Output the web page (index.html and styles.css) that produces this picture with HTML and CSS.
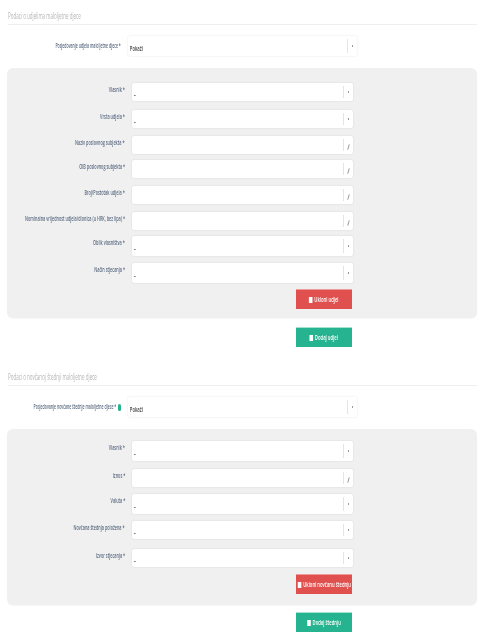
FILE: index.html
```html
<!DOCTYPE html>
<html lang="hr">
<head>
    <meta charset="UTF-8">
    <meta name="viewport" content="width=device-width, initial-scale=1.0">
    <title>Podaci o maloljetnoj djeci</title>
    <link rel="stylesheet" href="styles.css">
</head>
<body>
    <main class="page">
        <section class="block block-shares">
            <h2 class="block-title"><span>Podaci o udjelima maloljetne djece</span></h2>
            <div class="top-row">
                <label class="field-label"><span>Posjedovanje udjela maloljetne djece *</span></label>
                <div class="control top-control"><span class="value">Pokaži</span><span class="addon"><i class="caret"></i></span></div>
            </div>
            <div class="panel panel-shares">
                <div class="field"><label class="field-label"><span>Vlasnik *</span></label><div class="control"><span class="value">–</span><span class="addon"><i class="caret"></i></span></div></div>
                <div class="field"><label class="field-label"><span>Vrsta udjela *</span></label><div class="control"><span class="value">–</span><span class="addon"><i class="caret"></i></span></div></div>
                <div class="field"><label class="field-label"><span>Naziv poslovnog subjekta *</span></label><div class="control"><span class="addon"><svg class="pencil" viewBox="0 0 4 8"><path d="M1 7.5 3 .5"/></svg></span></div></div>
                <div class="field"><label class="field-label"><span>OIB poslovnog subjekta *</span></label><div class="control"><span class="addon"><svg class="pencil" viewBox="0 0 4 8"><path d="M1 7.5 3 .5"/></svg></span></div></div>
                <div class="field"><label class="field-label"><span>Broj/Postotak udjela *</span></label><div class="control"><span class="addon"><svg class="pencil" viewBox="0 0 4 8"><path d="M1 7.5 3 .5"/></svg></span></div></div>
                <div class="field"><label class="field-label"><span>Nominalna vrijednost udjela/dionica (u HRK, bez lipa) *</span></label><div class="control"><span class="addon"><svg class="pencil" viewBox="0 0 4 8"><path d="M1 7.5 3 .5"/></svg></span></div></div>
                <div class="field"><label class="field-label"><span>Oblik vlasništva *</span></label><div class="control tall"><span class="value">–</span><span class="addon"><i class="caret"></i></span></div></div>
                <div class="field"><label class="field-label"><span>Način stjecanja *</span></label><div class="control tall"><span class="value">–</span><span class="addon"><i class="caret"></i></span></div></div>
                <div class="actions"><button class="btn btn-remove" type="button"><span class="btn-inner"><i class="btn-icon"></i>Ukloni udjel</span></button></div>
            </div>
            <div class="actions outer"><button class="btn btn-add" type="button"><span class="btn-inner"><i class="btn-icon"></i>Dodaj udjel</span></button></div>
        </section>

        <section class="block block-savings">
            <h2 class="block-title"><span>Podaci o novčanoj štednji maloljetne djece</span></h2>
            <div class="top-row">
                <label class="field-label"><span>Posjedovanje novčane štednje maloljetne djece *</span><i class="info"></i></label>
                <div class="control top-control"><span class="value">Pokaži</span><span class="addon"><i class="caret"></i></span></div>
            </div>
            <div class="panel panel-savings">
                <div class="field"><label class="field-label"><span>Vlasnik *</span></label><div class="control tall"><span class="value">–</span><span class="addon"><i class="caret"></i></span></div></div>
                <div class="field"><label class="field-label"><span>Iznos *</span></label><div class="control"><span class="addon"><svg class="pencil" viewBox="0 0 4 8"><path d="M1 7.5 3 .5"/></svg></span></div></div>
                <div class="field"><label class="field-label"><span>Valuta *</span></label><div class="control tall"><span class="value">–</span><span class="addon"><i class="caret"></i></span></div></div>
                <div class="field"><label class="field-label"><span>Novčana štednja položena *</span></label><div class="control"><span class="value">–</span><span class="addon"><i class="caret"></i></span></div></div>
                <div class="field"><label class="field-label"><span>Izvor stjecanja *</span></label><div class="control"><span class="value">–</span><span class="addon"><i class="caret"></i></span></div></div>
                <div class="actions"><button class="btn btn-remove" type="button"><span class="btn-inner"><i class="btn-icon"></i>Ukloni novčanu štednju</span></button></div>
            </div>
            <div class="actions outer"><button class="btn btn-add" type="button"><span class="btn-inner"><i class="btn-icon"></i>Dodaj štednju</span></button></div>
        </section>
    </main>
</body>
</html>
```

FILE: styles.css
```css
body {
    margin: 0;
    background: #fff;
    font-family: "Open Sans", sans-serif;
    color: #5b6b82;
}
.page {
    width: 490px;
    height: 640px;
    overflow: hidden;
    padding: 10px 13px 0 7px;
    box-sizing: border-box;
    filter: blur(0.55px);
}
.block-savings {
    margin-top: 24px;
}
.block-savings .actions.outer {
    margin-top: 7px;
}
.block-title {
    margin: 0 0 11px 1px;
    height: 14px;
    border-bottom: 1px solid #efefef;
    font-size: 9px;
    line-height: 12px;
    font-weight: normal;
    color: #b4b4b4;
    white-space: nowrap;
}
.block-title span {
    display: inline-block;
    transform: scaleX(0.5);
    transform-origin: left;
}
.top-row {
    display: grid;
    grid-template-columns: 114px 229px;
    column-gap: 7px;
    height: 32px;
    align-items: start;
}
.top-row .field-label {
    padding-top: 5px;
}
.field {
    display: grid;
    grid-template-columns: 118px 221px;
    column-gap: 7px;
    align-items: start;
}
.field-label {
    display: flex;
    justify-content: flex-end;
    align-items: center;
    font-size: 7px;
    line-height: 10px;
    font-weight: 600;
    white-space: nowrap;
    padding-top: 2px;
}
.field-label span {
    display: inline-block;
    transform: scaleX(0.54);
    transform-origin: right;
}
.top-row .field-label span {
    transform: scaleX(0.5);
}
.info {
    flex: none;
    width: 3px;
    height: 7px;
    margin: 0 0 0 2px;
    border-radius: 2px;
    background: #26b38f;
}
.control {
    display: flex;
    justify-content: space-between;
    align-items: center;
    height: 18px;
    background: #fff;
    border-radius: 2px;
    box-shadow: 0 0 2px rgba(0, 0, 0, 0.12);
}
.control.tall {
    height: 20px;
}
.top-control {
    height: 20px;
}
.value {
    display: inline-block;
    padding: 4px 0 0 3px;
    font-size: 7px;
    font-weight: 600;
    color: #444;
    transform: scaleX(0.6);
    transform-origin: left;
}
.addon {
    display: flex;
    justify-content: center;
    align-items: center;
    width: 9px;
    height: 70%;
    margin-left: auto;
    border-left: 1px solid #e4e4e4;
}
.caret {
    width: 1px;
    height: 2px;
    background: #999;
}
.pencil {
    width: 3px;
    height: 8px;
    margin-top: 3px;
    fill: none;
    stroke: #777;
    stroke-width: 1;
}
.panel {
    display: grid;
    background: #f0f0f0;
    border-radius: 6px;
    box-shadow: 0 1px 1px rgba(0, 0, 0, 0.04);
}
.panel-shares {
    height: 250px;
    padding-top: 15px;
    box-sizing: border-box;
    grid-template-rows: 27px 26px 24px 26px 26px 24px 27px 26px 1fr;
}
.panel-savings {
    height: 176px;
    padding-top: 12px;
    box-sizing: border-box;
    grid-template-rows: 28px 25px 27px 28px 25px 1fr;
}
.actions {
    display: flex;
    justify-content: flex-end;
    width: 345px;
}
.actions.outer {
    margin-top: 9px;
}
.btn {
    display: flex;
    justify-content: center;
    align-items: center;
    width: 56px;
    height: 20px;
    padding: 0;
    border: 0;
    font-family: inherit;
    font-size: 7px;
    font-weight: 600;
    color: #fff;
    white-space: nowrap;
}
.btn-inner {
    display: flex;
    flex: none;
    align-items: center;
    gap: 3px;
    transform: scaleX(0.6);
}
.btn-remove {
    background: #e0504e;
    border-top: 1px solid #ee9c9a;
}
.btn-add {
    background: #26b38f;
    border-top: 1px solid #a5e2d2;
}
.btn-icon {
    flex: none;
    width: 6px;
    height: 6px;
    background: #fff;
}
```
